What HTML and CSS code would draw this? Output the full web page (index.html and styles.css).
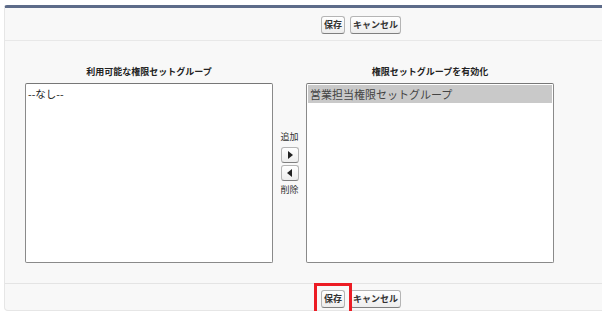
FILE: index.html
```html
<!DOCTYPE html>
<html lang="ja">
<head>
  <meta charset="UTF-8" />
  <title>権限セットグループの割り当て</title>
  <link rel="stylesheet" href="styles.css">
</head>
<body>
  <div class="page">
    <div class="panel">
      <div class="btn-row top">
        <button class="btn">保存</button>
        <button class="btn">キャンセル</button>
      </div>
      <div class="dual">
        <div class="col">
          <div class="col-title">利用可能な権限セットグループ</div>
          <div class="listbox">
            <div class="opt">--なし--</div>
          </div>
        </div>
        <div class="mover">
          <div class="mover-label">追加</div>
          <button class="arrow-btn"><span class="tri tri-right"></span></button>
          <button class="arrow-btn"><span class="tri tri-left"></span></button>
          <div class="mover-label">削除</div>
        </div>
        <div class="col">
          <div class="col-title">権限セットグループを有効化</div>
          <div class="listbox">
            <div class="opt selected">営業担当権限セットグループ</div>
          </div>
        </div>
      </div>
      <div class="btn-row bottom">
        <span class="highlight"><button class="btn">保存</button></span>
        <button class="btn">キャンセル</button>
      </div>
    </div>
  </div>
</body>
</html>
```

FILE: styles.css
```css
* { margin: 0; padding: 0; box-sizing: border-box; }
body {
  background: #fff;
  font-family: "Noto Sans CJK JP", "Liberation Sans", sans-serif;
  color: #222;
}
.page { padding: 5px 0 0 4px; }
.panel {
  width: 620px;
  background: #f8f8f8;
  border: 1px solid #e6e6e6;
  border-top: 3px solid #5d6b89;
  border-radius: 3px 0 0 4px;
}
.btn-row {
  display: flex;
  align-items: center;
  gap: 5px;
  padding-left: 316px;
}
.btn-row.top {
  height: 33px;
  padding-top: 2px;
  border-bottom: 1px solid #e8e8e8;
}
.btn-row.bottom {
  height: 27px;
  padding-top: 4px;
  border-top: 1px solid #e4e4e4;
}
.btn {
  font-family: inherit;
  font-size: 9px;
  font-weight: bold;
  line-height: 14px;
  color: #333;
  padding: 1px 2px;
  background: linear-gradient(#ffffff, #ededed);
  border: 1px solid #b5b5b5;
  border-bottom-color: #7f7f7f;
  border-radius: 3px;
}
.highlight { position: relative; display: inline-flex; }
.highlight::after {
  content: "";
  position: absolute;
  left: -7px;
  right: -7px;
  top: -7px;
  bottom: -6px;
  border: 3px solid #ec1c24;
}
.dual {
  display: flex;
  padding: 24px 0 20px 20px;
}
.col { width: 248px; }
.col-title {
  font-size: 9px;
  font-weight: bold;
  line-height: 14px;
  text-align: center;
  margin-bottom: 4px;
  color: #222;
}
.listbox {
  height: 180px;
  background: #fff;
  border: 1px solid #8a8a8a;
  border-top-color: #777;
  border-radius: 2px;
  padding: 1px;
}
.opt {
  font-size: 10.5px;
  line-height: 17px;
  padding-left: 1px;
  color: #222;
}
.opt.selected {
  background: #c9c9c9;
  color: #444;
  padding-left: 2px;
  font-size: 11px;
  line-height: 18px;
}
.mover {
  width: 33px;
  display: flex;
  flex-direction: column;
  align-items: center;
  padding-top: 66px;
  gap: 2px;
}
.mover-label {
  font-size: 9px;
  line-height: 12px;
  color: #333;
}
.mover-label:first-child { margin-bottom: 2px; }
.mover-label:last-child { margin-top: 1px; }
.arrow-btn {
  width: 18px;
  height: 16px;
  display: flex;
  align-items: center;
  justify-content: center;
  background: linear-gradient(#ffffff, #ededed);
  border: 1px solid #b5b5b5;
  border-bottom-color: #7f7f7f;
  border-radius: 3px;
}
.tri { width: 0; height: 0; border-top: 4px solid transparent; border-bottom: 4px solid transparent; }
.tri-right { border-left: 5px solid #222; margin-left: 1px; }
.tri-left { border-right: 5px solid #222; margin-right: 1px; }
```
